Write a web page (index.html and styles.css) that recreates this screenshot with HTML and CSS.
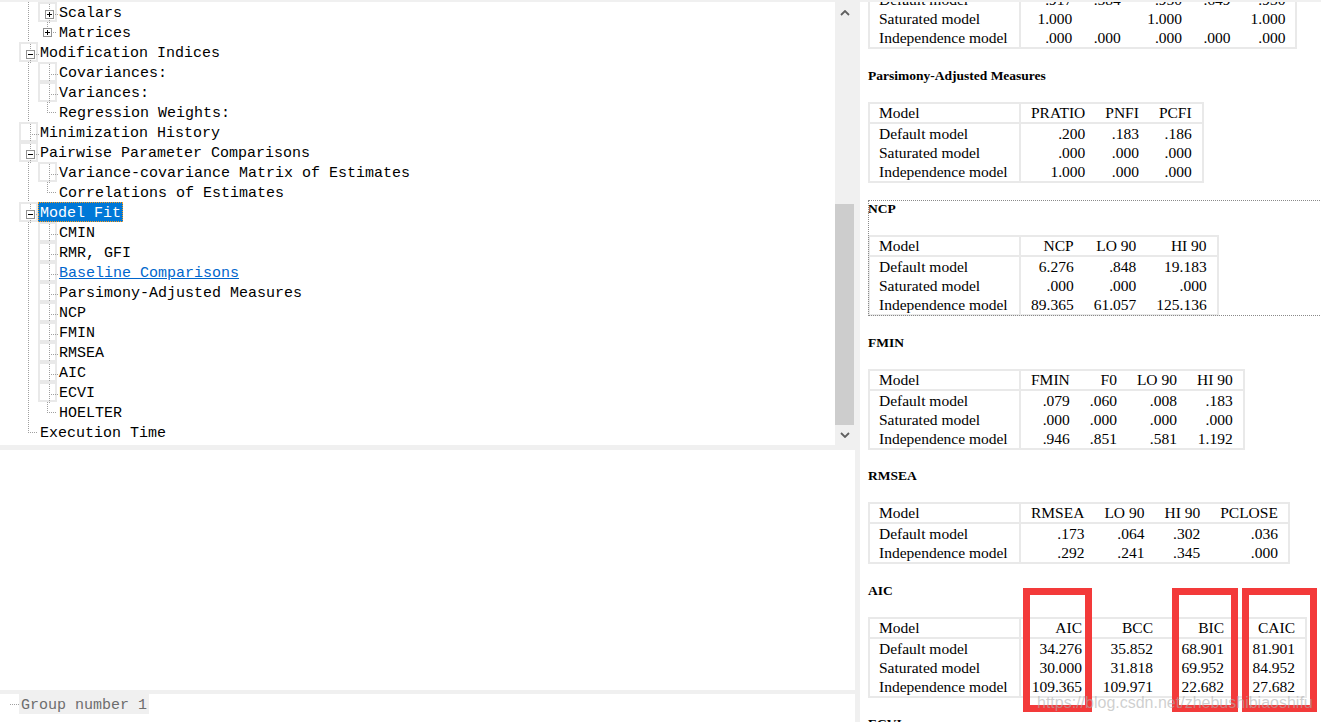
FILE: index.html
```html
<!DOCTYPE html>
<html>
<head>
<meta charset="utf-8">
<title>Amos Output</title>
<link rel="stylesheet" href="styles.css">
</head>
<body>
<div class="left">
  <div class="tree-wrap">
    <div class="tree">
      <div class="row"><span class="g v"></span><span class="g t"><span class="bx plus"></span></span><span class="lbl">Scalars</span></div>
      <div class="row"><span class="g v"></span><span class="g l"><span class="bx plus"></span></span><span class="lbl">Matrices</span></div>
      <div class="row"><span class="g t"><span class="bx"></span></span><span class="lbl">Modification Indices</span></div>
      <div class="row"><span class="g v"></span><span class="g t"></span><span class="lbl">Covariances:</span></div>
      <div class="row"><span class="g v"></span><span class="g t"></span><span class="lbl">Variances:</span></div>
      <div class="row"><span class="g v"></span><span class="g l"></span><span class="lbl">Regression Weights:</span></div>
      <div class="row"><span class="g t"></span><span class="lbl">Minimization History</span></div>
      <div class="row"><span class="g t"><span class="bx"></span></span><span class="lbl">Pairwise Parameter Comparisons</span></div>
      <div class="row"><span class="g v"></span><span class="g t"></span><span class="lbl">Variance-covariance Matrix of Estimates</span></div>
      <div class="row"><span class="g v"></span><span class="g l"></span><span class="lbl">Correlations of Estimates</span></div>
      <div class="row"><span class="g t"><span class="bx"></span></span><span class="lbl sel">Model Fit</span></div>
      <div class="row"><span class="g v"></span><span class="g t"></span><span class="lbl">CMIN</span></div>
      <div class="row"><span class="g v"></span><span class="g t"></span><span class="lbl">RMR, GFI</span></div>
      <div class="row"><span class="g v"></span><span class="g t"></span><span class="lbl link">Baseline Comparisons</span></div>
      <div class="row"><span class="g v"></span><span class="g t"></span><span class="lbl">Parsimony-Adjusted Measures</span></div>
      <div class="row"><span class="g v"></span><span class="g t"></span><span class="lbl">NCP</span></div>
      <div class="row"><span class="g v"></span><span class="g t"></span><span class="lbl">FMIN</span></div>
      <div class="row"><span class="g v"></span><span class="g t"></span><span class="lbl">RMSEA</span></div>
      <div class="row"><span class="g v"></span><span class="g t"></span><span class="lbl">AIC</span></div>
      <div class="row"><span class="g v"></span><span class="g t"></span><span class="lbl">ECVI</span></div>
      <div class="row"><span class="g v"></span><span class="g l"></span><span class="lbl">HOELTER</span></div>
      <div class="row"><span class="g l"></span><span class="lbl">Execution Time</span></div>
    </div>
    <div class="sbar">
      <div class="sbtn up"><svg width="10" height="6" viewBox="0 0 10 6"><polyline points="1,5 5,1 9,5" fill="none" stroke="#606060" stroke-width="1.8"/></svg></div>
      <div class="track"><div class="thumb"></div></div>
      <div class="sbtn down"><svg width="10" height="6" viewBox="0 0 10 6"><polyline points="1,1 5,5 9,1" fill="none" stroke="#606060" stroke-width="1.8"/></svg></div>
    </div>
  </div>
  <div class="hsep"></div>
  <div class="blank"></div>
  <div class="hsep2"></div>
  <div class="groups">
    <div class="row root"><span class="g h"></span><span class="lbl grp">Group number 1</span></div>
  </div>
</div>

<div class="right">
  <div class="doc">
    <section class="sec first">
      <table class="t">
        <thead><tr><th class="nm">Model</th><th>NFI<br>Delta1</th><th>RFI<br>rho1</th><th>IFI<br>Delta2</th><th>TLI<br>rho2</th><th>CFI</th></tr></thead>
        <tbody>
          <tr><td class="nm">Default model</td><td>.917</td><td>.584</td><td>.950</td><td>.649</td><td>.930</td></tr>
          <tr><td class="nm">Saturated model</td><td>1.000</td><td></td><td>1.000</td><td></td><td>1.000</td></tr>
          <tr><td class="nm">Independence model</td><td>.000</td><td>.000</td><td>.000</td><td>.000</td><td>.000</td></tr>
        </tbody>
      </table>
    </section>

    <section class="sec">
      <h3 class="hd">Parsimony-Adjusted Measures</h3>
      <table class="t">
        <thead><tr><th class="nm">Model</th><th>PRATIO</th><th>PNFI</th><th>PCFI</th></tr></thead>
        <tbody>
          <tr><td class="nm">Default model</td><td>.200</td><td>.183</td><td>.186</td></tr>
          <tr><td class="nm">Saturated model</td><td>.000</td><td>.000</td><td>.000</td></tr>
          <tr><td class="nm">Independence model</td><td>1.000</td><td>.000</td><td>.000</td></tr>
        </tbody>
      </table>
    </section>

    <section class="sec focus">
      <h3 class="hd">NCP</h3>
      <table class="t">
        <thead><tr><th class="nm">Model</th><th>NCP</th><th>LO 90</th><th>HI 90</th></tr></thead>
        <tbody>
          <tr><td class="nm">Default model</td><td>6.276</td><td>.848</td><td>19.183</td></tr>
          <tr><td class="nm">Saturated model</td><td>.000</td><td>.000</td><td>.000</td></tr>
          <tr><td class="nm">Independence model</td><td>89.365</td><td>61.057</td><td>125.136</td></tr>
        </tbody>
      </table>
    </section>

    <section class="sec">
      <h3 class="hd">FMIN</h3>
      <table class="t">
        <thead><tr><th class="nm">Model</th><th>FMIN</th><th>F0</th><th>LO 90</th><th>HI 90</th></tr></thead>
        <tbody>
          <tr><td class="nm">Default model</td><td>.079</td><td>.060</td><td>.008</td><td>.183</td></tr>
          <tr><td class="nm">Saturated model</td><td>.000</td><td>.000</td><td>.000</td><td>.000</td></tr>
          <tr><td class="nm">Independence model</td><td>.946</td><td>.851</td><td>.581</td><td>1.192</td></tr>
        </tbody>
      </table>
    </section>

    <section class="sec">
      <h3 class="hd">RMSEA</h3>
      <table class="t">
        <thead><tr><th class="nm">Model</th><th>RMSEA</th><th>LO 90</th><th>HI 90</th><th>PCLOSE</th></tr></thead>
        <tbody>
          <tr><td class="nm">Default model</td><td>.173</td><td>.064</td><td>.302</td><td>.036</td></tr>
          <tr><td class="nm">Independence model</td><td>.292</td><td>.241</td><td>.345</td><td>.000</td></tr>
        </tbody>
      </table>
    </section>

    <section class="sec">
      <h3 class="hd">AIC</h3>
      <table class="t wide">
        <thead><tr><th class="nm">Model</th><th>AIC</th><th>BCC</th><th>BIC</th><th>CAIC</th></tr></thead>
        <tbody>
          <tr><td class="nm">Default model</td><td>34.276</td><td>35.852</td><td>68.901</td><td>81.901</td></tr>
          <tr><td class="nm">Saturated model</td><td>30.000</td><td>31.818</td><td>69.952</td><td>84.952</td></tr>
          <tr><td class="nm">Independence model</td><td>109.365</td><td>109.971</td><td>22.682</td><td>27.682</td></tr>
        </tbody>
      </table>
    </section>

    <section class="sec">
      <h3 class="hd">ECVI</h3>
    </section>
  </div>
</div>

<div class="mark m1"></div>
<div class="mark m2"></div>
<div class="mark m3"></div>
<div class="wm">https://blog.csdn.net/zhebushibiaoshifu</div>
</body>
</html>
```

FILE: styles.css
```css
* { box-sizing: border-box; margin: 0; padding: 0; }

html, body { width: 1321px; height: 722px; overflow: hidden; }

body {
  position: relative;
  background: #f0f0f0;
  padding-top: 2px;
  display: flex;
  gap: 5px;
  font-family: "Liberation Serif", serif;
  color: #000;
}

/* ---------- left pane ---------- */
.left {
  width: 855px;
  height: 720px;
  display: flex;
  flex-direction: column;
  flex: none;
}

.tree-wrap {
  height: 443px;
  display: flex;
  flex: none;
}

.tree {
  width: 835px;
  background: #fff;
  font: 15px/20px "Liberation Mono", monospace;
  overflow: hidden;
}

.row {
  display: flex;
  height: 20px;
  padding-left: 19px;
  white-space: pre;
}

.row.root { padding-left: 0; }

.g {
  position: relative;
  width: 19px;
  height: 20px;
  flex: none;
}

.g::before, .g::after { content: ""; position: absolute; }

.g.v::before, .g.t::before, .g.l::before {
  left: 9px;
  top: 0;
  width: 1px;
  height: 20px;
  background: repeating-linear-gradient(to bottom, #a0a0a0 0 1px, transparent 1px 2px);
}

.g.l::before { height: 11px; }

.g.t::after, .g.l::after, .g.h::after {
  left: 10px;
  top: 10px;
  width: 9px;
  height: 1px;
  background: repeating-linear-gradient(to right, transparent 0 1px, #a0a0a0 1px 2px);
}

.g.h::after { left: 9px; width: 10px; }

.bx {
  position: absolute;
  z-index: 1;
  left: 5px;
  top: 6px;
  width: 9px;
  height: 9px;
  border: 1px solid #919191;
  background: #fff;
}

.bx::before {
  content: "";
  position: absolute;
  left: 1px; top: 3px;
  width: 5px; height: 1px;
  background: #000;
}

.bx.plus::after {
  content: "";
  position: absolute;
  left: 3px; top: 1px;
  width: 1px; height: 5px;
  background: #000;
}

.lbl {
  padding: 2px 2px 0;
  height: 20px;
  line-height: 20px;
}

.lbl.sel {
  background: #0078d7;
  color: #fff;
  outline: 1px dotted #ff9c1a;
  outline-offset: -1px;
}

.lbl.link {
  color: #0066cc;
  text-decoration: underline;
}

.lbl.grp {
  background: #f0f0f0;
  color: #6d6d6d;
}

/* scrollbar */
.sbar {
  width: 20px;
  display: flex;
  flex-direction: column;
  background: #f0f0f0;
}

.sbtn {
  display: flex;
  align-items: center;
  justify-content: center;
  padding-right: 1px;
  flex: none;
}

.sbtn.up { height: 21px; }
.sbtn.down { height: 20px; }

.track { flex: 1; padding-top: 181px; }

.thumb {
  width: 19px;
  height: 221px;
  background: #cdcdcd;
}

.hsep { height: 5px; flex: none; }
.blank { height: 240px; background: #fff; flex: none; }
.hsep2 { height: 4px; flex: none; }

.groups {
  flex: 1;
  background: #fff;
  font: 15px/20px "Liberation Mono", monospace;
}

/* ---------- right pane ---------- */
.right {
  width: 461px;
  height: 720px;
  background: #fff;
  overflow: hidden;
  flex: none;
}

.doc {
  padding-left: 8px;
  margin-top: -52px;
}

.sec { margin-top: 17.5px; }
.sec.first { margin-top: 0; }

.sec.focus {
  width: 470px;
  outline: 1px dotted #8a8a8a;
  outline-offset: -1px;
}

.hd {
  font: bold 13.5px/16px "Liberation Serif", serif;
  margin-bottom: 19px;
  padding-top: 1px;
  height: 16px;
  white-space: nowrap;
}

.t {
  border-collapse: separate;
  border-spacing: 0;
  border: 2px solid #e9e9e9;
  font-size: 15.5px;
  white-space: nowrap;
}

.t th, .t td {
  padding: 0 10px;
  text-align: right;
  font-weight: normal;
}

.t th {
  line-height: 18px;
  border-bottom: 2px solid #e9e9e9;
}

.t td { line-height: 19px; }

.t .nm {
  width: 151px;
  padding: 0 0 0 9px;
  text-align: left;
  border-right: 2px solid #e9e9e9;
}

.t.wide th:not(.nm), .t.wide td:not(.nm) { width: 71px; }

/* ---------- annotations ---------- */
.mark {
  position: absolute;
  top: 588px;
  height: 124px;
  border: 7px solid #f33a3a;
}

.m1 { left: 1023px; width: 69px; }
.m2 { left: 1172px; width: 66px; }
.m3 { left: 1242px; width: 75px; }

.wm {
  position: absolute;
  left: 1037px;
  top: 694px;
  font: 16px/18px "Liberation Sans", sans-serif;
  color: rgba(175, 175, 175, 0.6);
  white-space: nowrap;
}
```
